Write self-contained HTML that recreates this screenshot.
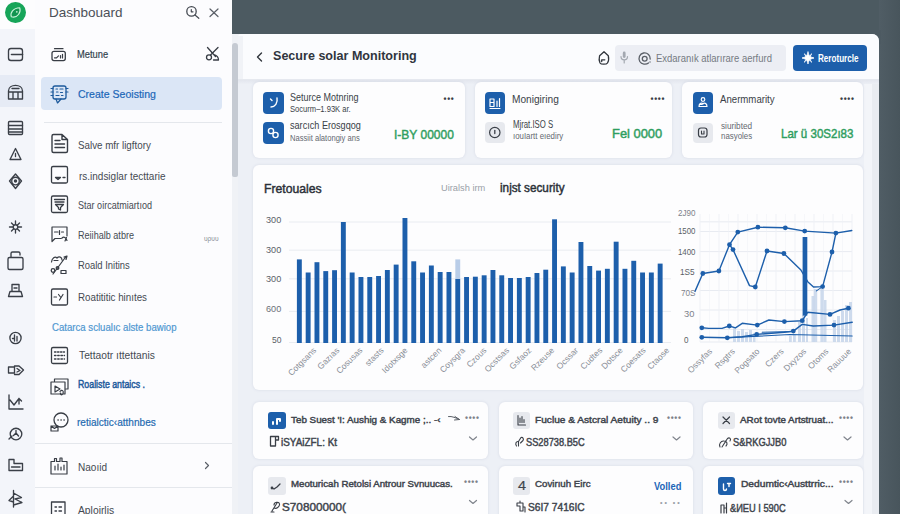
<!DOCTYPE html>
<html>
<head>
<meta charset="utf-8">
<style>
*{box-sizing:border-box;margin:0;padding:0}
html,body{width:900px;height:514px;overflow:hidden}
body{font-family:"Liberation Sans",sans-serif;background:#edf0f6;position:relative;color:#2b3038}
.abs{position:absolute}
.t{position:absolute;white-space:nowrap;line-height:1;transform-origin:left center;transform:translateY(-50%)}
#topbar{left:232px;top:0;width:668px;height:34px;background:#4c5a61}
#rightbar{left:879px;top:0;width:21px;height:514px;background:linear-gradient(to right,#505d65,#48555c)}
#panel{left:238px;top:34px;width:641px;height:480px;background:#edf0f6;border-top-right-radius:7px;border-top-left-radius:3px;overflow:hidden}
#phead{left:0;top:0;width:641px;height:46px;background:#fbfcfe;border-bottom:1px solid #e6e9ef}
#rail{left:0;top:0;width:35px;height:514px;background:#f3f5fa}
#railtop{left:0;top:0;width:35px;height:29px;background:#fdfdfe}
#side{left:35px;top:0;width:197px;height:514px;background:#fcfcfe}
#sbar{left:232px;top:34px;width:6px;height:480px;background:#f0f2f6}
#sthumb{left:232px;top:42.500px;width:6px;height:134px;background:#c5cad2;border-radius:3px 3px 2px 2px}
.card{position:absolute;background:#fdfdfe;border-radius:6px;box-shadow:0 0 3px rgba(120,130,160,.18)}
.ico{position:absolute;border-radius:4px}
.blue{background:#1d5fab}
.grey{background:#e7e9ee}
.mi{font-size:11px;color:#3a3f47}
.dots{position:absolute;font-size:8.5px;letter-spacing:.7px;color:#3a3f47;line-height:1;transform:translateY(-50%);font-weight:bold}
.green{color:#2c9c5c}
.hr{position:absolute;height:1px;background:#e4e7ec}
.xl{position:absolute;font-size:8.5px;color:#8a8f98;white-space:nowrap;line-height:1;transform-origin:right top;transform:rotate(-45deg)}
</style>
</head>
<body>
<div id="topbar" class="abs"></div>
<div id="rightbar" class="abs"></div>
<div class="abs" style="left:869px;top:30px;width:12px;height:14px;background:#4d5a62"></div>
<div id="sbar" class="abs"></div>
<div id="sthumb" class="abs"></div>

<!-- RAIL -->
<div id="rail" class="abs"></div>
<div id="railtop" class="abs"></div>
<div class="abs" style="left:0;top:75px;width:35px;height:32px;background:#e6ebf5"></div>
<div id="side" class="abs"></div>
<!-- logo -->
<div class="abs" style="left:5.100px;top:2.300px;width:20.800px;height:20.800px;border-radius:50%;background:#17a559"></div>
<svg class="abs" style="left:5px;top:2px" width="21" height="21" viewBox="0 0 21 21"><path d="M6.300 14.800 C5 11 8 6 14.800 5.800 C16 10 13 16.500 6.300 14.800 Z" fill="#129450" stroke="#cdf3dc" stroke-width="1.100" stroke-linejoin="round"/><circle cx="11.800" cy="9.800" r="0.900" fill="#bfeccf"/></svg>
<svg class="abs" style="left:0;top:28px" width="35" height="486" viewBox="0 28 35 486" fill="none" stroke="#3a3f47" stroke-width="1.35" stroke-linecap="round" stroke-linejoin="round">
<!-- card 54 -->
<rect x="8.5" y="48.5" width="14" height="12" rx="2.5"/><path d="M11.5 54.5 H22.5" stroke-width="1.6"/>
<!-- building 92 -->
<path d="M8.5 99 V91 C8.5 83.5 22.5 83.5 22.5 91 V99 Z M8.5 92 H22.5 M13 92 V99 M18 92 V99 M12 88.5 H19"/>
<!-- list 128 -->
<rect x="8.5" y="121.500" width="14" height="13" rx="1"/><path d="M8.5 125.500 H22.5 M8.5 129 H22.5 M8.5 132 H22.500"/>
<!-- triangle 154 -->
<path d="M15.5 148.500 L21 159.500 H10 Z M15.5 153.500 V156.500"/>
<!-- target 181 -->
<path d="M15.5 174 L21.5 181 L15.5 188.500 L9.5 181 Z"/><circle cx="15.5" cy="181" r="3.8"/><circle cx="15.500" cy="181" r="1" fill="#3a3f47"/>
<!-- sparkle 227 -->
<path d="M15.5 221 V233 M9.5 227 H21.5 M11.500 223 L19.500 231 M19.500 223 L11.500 231"/><circle cx="15.5" cy="227" r="2.300" fill="#f3f5fa"/>
<!-- lock 260 -->
<path d="M9.500 257.500 H21.500 C22.500 257.500 23 258 23 259 V268 C23 269 22.500 269.500 21.500 269.500 H9.500 C8.500 269.500 8 269 8 268 V259 C8 258 8.500 257.500 9.500 257.500 Z M11 257.500 V253.500 C11 252.500 11.500 252 12.500 252 H18.500 C19.500 252 20 252.500 20 253.500 V255"/>
<!-- stamp 290 -->
<path d="M12 284.500 H19 V291.500 H12 Z M10 291.500 H21 L22.500 296.500 H8.5 Z M14 288 H17"/>
<!-- clock 338 -->
<circle cx="15.500" cy="338" r="5.600"/><path d="M14.500 335 V341 M17 336.500 V341 M12.500 338.500 H14.500"/>
<!-- arrow 370 -->
<path d="M8.5 367 H14.500 V373 H8.5 Z M14.500 366 H19 L23.500 370 L19 374.500 H14.500 M17 368.500 L20 370.500 L17 372"/>
<!-- chart 402 -->
<path d="M9 395 V409 H23 M10 400 L14 405 L19 398.500 L21.500 401 M19 398.500 V404"/>
<!-- circle 434 -->
<circle cx="16" cy="434" r="5.800"/><path d="M9 439 L12 436 M13.500 435.500 L16 433 L18.500 436 M16 430.500 V433"/>
<!-- folder 465 -->
<path d="M9 459.500 H14 V463.500 H22.500 V470.500 H9 Z M11.500 467 H20"/>
<!-- fan 499 -->
<path d="M13.500 490.500 V507 M13.500 493 L21.500 497.500 L15 499 L22 502.500 L13.500 505 M13.500 496 L9 500.500 L13.500 502"/>
</svg>

<div class="abs" style="left:41.300px;top:76.600px;width:180.500px;height:33px;border-radius:4px;background:#dbe6f6"></div>
<div class="hr" style="left:44px;top:122px;width:178px"></div>
<div class="hr" style="left:35px;top:443px;width:197px"></div>
<div class="hr" style="left:35px;top:487px;width:197px"></div>
<svg class="abs" style="left:35px;top:0" width="197" height="514" viewBox="35 0 197 514" fill="none" stroke="#383d45" stroke-width="1.3" stroke-linecap="round" stroke-linejoin="round">
<!-- search + close -->
<circle cx="191.500" cy="11.400" r="4.700" stroke="#454a52"/><path d="M195 15 L198.800 18.300 M191.300 9.500 V11.800 H193" stroke="#454a52" stroke-width="1.200"/>
<path d="M210 9 L218 16.500 M218 9 L210 16.500" stroke="#5a5f67" stroke-width="1.2"/>
<!-- scissors -->
<path d="M207.500 47.500 L215.500 56.500 M218 47.500 L210.500 55 M214 54.500 C217 55.500 218.500 58 218.500 60 H213.500"/><circle cx="209" cy="57.300" r="2.500"/>
<!-- Metune icon -->
<rect x="52" y="51.300" width="13.300" height="9.300" rx="2"/><path d="M54.500 48.700 H63 M54.500 57.800 L56.500 57.800 L58.500 55.800 M60.500 55.500 V58 M62.500 54.300 V58" stroke-width="1.200"/>
<!-- Create icon -->
<g stroke="#1d5a9c"><rect x="53" y="86" width="13" height="13" rx="2"/><path d="M51 88.500 H53 M51 92 H53 M51 95.500 H53 M66 88.500 H68 M66 92 H68 M56 99 L57.500 103 L61 99 M56 89 H57.500 M60 89 H63 M56.500 92 H58 M60.500 92.500 H62.500 M56 95.500 H59 M61.500 95.500 H63" stroke-width="1.200"/></g>
<!-- doc 145 -->
<path d="M53.500 134.500 H62 L67.500 139.500 V151 C67.500 152 67 152.500 66 152.500 H53.500 C52.500 152.500 52 152 52 151 V136 C52 135 52.500 134.500 53.500 134.500 Z M55 140.500 H60 M55 144 H64.500 M55 147.500 H64.500 M62 134.500 V139.500 H67.500" stroke-width="1.400"/>
<!-- box 175 -->
<rect x="51.500" y="166.500" width="16" height="16.500" rx="1.500"/><path d="M55.500 177.500 H60.500 L58 179.500 Z M63 177.500 H65" />
<!-- filter 205 -->
<rect x="51.500" y="196" width="16" height="16.500" rx="1.500"/><path d="M54.500 199.500 H64.500 M55 202 H64 M55.500 204.500 H63.500 L60.500 207.500 V210 L58.500 209 V207.500 Z"/>
<!-- img 235 -->
<path d="M52 241.500 V227 H67 V236 M52 241.500 L55 238.500 H61 M54.500 232 H58 M59.500 230.500 V234.500 M61.500 232 H63.500 M62 238 C64 236 66 238 67 240.500 M65 241 L66.500 237.500" stroke-width="1.200"/>
<!-- tools 265 -->
<path d="M53 274 L66 256.500 M51.500 262 C52 258 55 256 57 258 C59 256 62 257 62 260 M54 260.500 H58 M64 257 L67 256 L66 259.500 M61 273.500 V270.500 H66 V273.500 Z" stroke-width="1.200"/><circle cx="53" cy="270.500" r="1.800"/><circle cx="57.500" cy="268" r="1.300"/>
<!-- xy 297 -->
<rect x="51.500" y="289" width="16" height="16" rx="1.500"/><path d="M54 297 H56.500 M58.500 294.500 L60.500 297 M63 294.500 L59.500 300" stroke-width="1.200"/>
<!-- calendar 356 -->
<rect x="51.500" y="347.500" width="16" height="16" rx="1.500"/><path d="M54.500 352 H64.500" stroke-dasharray="1.500 1.500"/><path d="M54.500 355.500 H64.500 M54.500 359 H64.500" stroke-dasharray="1.500 1.700"/>
<!-- imgs 387 -->
<path d="M54.500 381 V379 H68 V389 H66 M51 382 H65 V394 H51 Z M55 386 L60 389 L55 392 Z M60 391.500 C62 389 64 391 63 393.500 C62 395.500 60 395 60.500 393" stroke-width="1.200"/>
<!-- chat 422 -->
<circle cx="61" cy="420" r="7"/><path d="M58 420 H58.200 M61 420 H61.200 M64 420 H64.200" stroke-width="1.500"/><path d="M51 426 H58 V431 H51 Z M51 426 L54.500 428.500 L58 426" fill="#fcfcfe" stroke-width="1.200"/>
<!-- Naoid 466 -->
<path d="M51 461.500 H54.500 V458.500 H56.500 V461.500 H60 V458 H62 V461.500 H67 V474 H51 Z M55 470 V466 M58 470 V464 M61 470 V467 M64 470 V465" stroke-width="1.200"/>
<path d="M205.500 462.500 L208.500 465.500 L205.500 468.500" stroke="#5a5f67" stroke-width="1.200"/>
<!-- Aploirlis 509 -->
<path d="M51.500 514 V502 H65 V514 M55 507 H56.500 M59 507 H61.500 M55 511 H56.500 M59 511 H61.500"/>
</svg>


<!-- MAIN PANEL -->
<div id="panel" class="abs">
<div id="phead" class="abs"></div>
</div>
<div class="abs" style="left:238px;top:36px;width:5px;height:43px;background:#f1f3f7"></div>
<div class="abs" style="left:864px;top:80px;width:8px;height:434px;background:#f3f5f9"></div>
<div class="abs" style="left:872px;top:80px;width:7px;height:434px;background:#e9ecf1"></div>
<div class="abs" style="left:238px;top:80px;width:641px;height:4px;background:linear-gradient(#e3e6ee,#eceff5)"></div>
<svg class="abs" style="left:238px;top:35px" width="641" height="45" viewBox="238 35 641 45" fill="none" stroke="#30353c" stroke-width="1.4" stroke-linecap="round" stroke-linejoin="round">
<path d="M261.500 53 L257.500 57 L261.500 61"/>
<!-- home -->
<path d="M604 51.700 L599.600 55.700 C599 58 599 61 600 63 C601 64.600 606.500 64.600 607.500 63 C608.800 61 608.800 58 608.300 55.700 Z M601.700 61.500 V59.800 H604.800" stroke-width="1.300"/>
</svg>
<div class="abs" style="left:615.300px;top:45px;width:170.500px;height:26px;border-radius:4px;background:#eceef4"></div>
<svg class="abs" style="left:616px;top:45px" width="170" height="26" viewBox="616 45 170 26" fill="none" stroke="#a3a8b0" stroke-width="1.2" stroke-linecap="round" stroke-linejoin="round">
<rect x="622.800" y="51.500" width="2.800" height="6.500" rx="1.400" fill="#a3a8b0" stroke="none"/><path d="M621 56.500 C621 61 627.500 61 627.500 56.500 M624.200 60 V63"/>
<path d="M648.500 63 C646 65 641.500 64.500 639.800 61.500 C638 58 639.500 53.800 643.500 53 C647.500 52.300 650.500 55.500 650.200 59" stroke="#5a5f67" stroke-width="1.300"/><circle cx="644.700" cy="58.700" r="2.400" stroke="#5a5f67" stroke-width="1.300"/><circle cx="650" cy="62" r="0.700" fill="#5a5f67" stroke="none"/>
</svg>
<div class="abs" style="left:793px;top:45px;width:74px;height:26px;border-radius:4px;background:#1d5fab"></div>
<svg class="abs" style="left:800px;top:50px" width="16" height="16" viewBox="0 0 16 16" fill="none" stroke="#fff" stroke-width="1.3" stroke-linecap="round" stroke-linejoin="round">
<path d="M8 2 C8.500 5.500 10 7 14 8 C10 9 8.500 10.500 8 14 C7.500 10.500 6 9 2 8 C6 7 7.500 5.500 8 2 Z" fill="#fff" stroke-width="0.800"/><path d="M4.500 4 L6 6 M11.500 12 L10 10 M11.500 4 L10.500 5.500 M4.500 12 L5.500 10.500" stroke-width="1.100"/>
</svg>

<div class="card" style="left:253px;top:82px;width:212px;height:76px"></div>
<div class="card" style="left:475px;top:82px;width:197px;height:76px"></div>
<div class="card" style="left:682px;top:82px;width:181px;height:76px"></div>
<div class="ico blue" style="left:263px;top:92px;width:20.500px;height:21.500px"></div>
<div class="ico blue" style="left:263px;top:122px;width:20.500px;height:21.500px"></div>
<div class="ico blue" style="left:484.500px;top:92px;width:20.500px;height:21.500px"></div>
<div class="ico grey" style="left:485px;top:122px;width:19.500px;height:21px"></div>
<div class="ico blue" style="left:692.500px;top:92px;width:20.500px;height:21.500px"></div>
<div class="ico grey" style="left:693px;top:122.500px;width:19.500px;height:20.500px"></div>
<svg class="abs" style="left:253px;top:82px" width="610" height="76" viewBox="253 82 610 76" fill="none" stroke="#fff" stroke-width="1.4" stroke-linecap="round" stroke-linejoin="round">
<!-- c1 i1 -->
<path d="M270.500 99 L272 100.500 M277 98 C278 103 275 107 271 107"/>
<!-- c1 i2 -->
<circle cx="271" cy="131" r="2.600"/><circle cx="275.500" cy="135" r="2.600"/>
<!-- c2 i1 -->
<path d="M490 99 H494 V106.500 H490 Z M490 102.500 H494 M497 101 V106.500 M499.500 98.500 V106.500 M490 108.500 H500" stroke-width="1.200"/>
<!-- c2 i2 -->
<circle cx="494.800" cy="132.500" r="5.200" stroke="#3a3f47" stroke-width="1.200"/><path d="M494.800 130.500 V133.500" stroke="#3a3f47" stroke-width="1.300"/>
<!-- c3 i1 -->
<circle cx="703" cy="99.500" r="1.800" stroke-width="1.200"/><path d="M699 106.500 C699 103 702 102.500 703 104 C704 102.500 707 103 707 106.500 Z M699.500 104.500 H702" stroke-width="1.200"/>
<!-- c3 i2 -->
<rect x="698.500" y="128" width="8.500" height="9" rx="2.500" stroke="#3a3f47" stroke-width="1.200"/><path d="M701.500 131 V134 H704 V131" stroke="#3a3f47" stroke-width="1.100"/>
</svg>
<div class="dots" style="left:443.500px;top:99px">•••</div>
<div class="dots" style="left:650.500px;top:99px">••••</div>
<div class="dots" style="left:840px;top:99px">••••</div>

<div class="card" style="left:253px;top:165px;width:610px;height:225px"></div>
<svg class="abs" style="left:253px;top:165px" width="610" height="225" viewBox="253 165 610 225" fill="none">
<path d="M289 222 H671" stroke="#e9ecf1" stroke-width="1"/>
<path d="M289 250.2 H671" stroke="#e9ecf1" stroke-width="1"/>
<path d="M289 278.8 H671" stroke="#e9ecf1" stroke-width="1"/>
<path d="M289 311.4 H671" stroke="#e9ecf1" stroke-width="1"/>
<path d="M289 342.5 H671" stroke="#e9ecf1" stroke-width="1"/>
<rect x="296.9" y="259.4" width="4.9" height="83.6" fill="#1d5fab"/>
<rect x="305.7" y="272.5" width="4.9" height="70.5" fill="#1d5fab"/>
<rect x="314.5" y="262.2" width="4.9" height="80.8" fill="#1d5fab"/>
<rect x="323.3" y="271.1" width="4.9" height="71.9" fill="#1d5fab"/>
<rect x="332.1" y="270.2" width="4.9" height="72.8" fill="#1d5fab"/>
<rect x="340.9" y="222" width="4.9" height="121.0" fill="#1d5fab"/>
<rect x="349.7" y="272.5" width="4.9" height="70.5" fill="#1d5fab"/>
<rect x="358.5" y="277" width="4.9" height="66.0" fill="#1d5fab"/>
<rect x="367.3" y="277" width="4.9" height="66.0" fill="#1d5fab"/>
<rect x="376.1" y="276" width="4.9" height="67.0" fill="#1d5fab"/>
<rect x="384.9" y="270" width="4.9" height="73.0" fill="#1d5fab"/>
<rect x="393.7" y="264.6" width="4.9" height="78.4" fill="#1d5fab"/>
<rect x="402.5" y="218" width="4.9" height="125.0" fill="#1d5fab"/>
<rect x="411.3" y="261.3" width="4.9" height="81.7" fill="#1d5fab"/>
<rect x="420.1" y="272.5" width="4.9" height="70.5" fill="#1d5fab"/>
<rect x="428.9" y="265.5" width="4.9" height="77.5" fill="#1d5fab"/>
<rect x="437.7" y="272" width="4.9" height="71.0" fill="#1d5fab"/>
<rect x="446.5" y="272" width="4.9" height="71.0" fill="#1d5fab"/>
<rect x="455.3" y="259.4" width="4.9" height="19.6" fill="#b9cde8"/>
<rect x="455.3" y="279" width="4.9" height="64.0" fill="#1d5fab"/>
<rect x="464.1" y="277" width="4.9" height="66.0" fill="#1d5fab"/>
<rect x="472.9" y="276.7" width="4.9" height="66.3" fill="#1d5fab"/>
<rect x="481.7" y="275.3" width="4.9" height="67.7" fill="#1d5fab"/>
<rect x="490.5" y="270" width="4.9" height="73.0" fill="#1d5fab"/>
<rect x="499.3" y="275.3" width="4.9" height="67.7" fill="#1d5fab"/>
<rect x="508.1" y="278" width="4.9" height="65.0" fill="#1d5fab"/>
<rect x="516.9" y="278" width="4.9" height="65.0" fill="#1d5fab"/>
<rect x="525.7" y="277" width="4.9" height="66.0" fill="#1d5fab"/>
<rect x="534.5" y="273" width="4.9" height="70.0" fill="#1d5fab"/>
<rect x="543.3" y="269.7" width="4.9" height="73.3" fill="#1d5fab"/>
<rect x="552.1" y="219.3" width="4.9" height="123.7" fill="#1d5fab"/>
<rect x="560.9" y="266.4" width="4.9" height="76.6" fill="#1d5fab"/>
<rect x="569.7" y="272.5" width="4.9" height="70.5" fill="#1d5fab"/>
<rect x="578.5" y="242" width="4.9" height="101.0" fill="#1d5fab"/>
<rect x="587.3" y="266" width="4.9" height="77.0" fill="#1d5fab"/>
<rect x="596.1" y="270.6" width="4.9" height="72.4" fill="#1d5fab"/>
<rect x="604.9" y="268.8" width="4.9" height="74.2" fill="#1d5fab"/>
<rect x="613.7" y="241.7" width="4.9" height="101.3" fill="#1d5fab"/>
<rect x="622.5" y="268.8" width="4.9" height="74.2" fill="#1d5fab"/>
<rect x="631.3" y="260.8" width="4.9" height="82.2" fill="#1d5fab"/>
<rect x="640.1" y="272.5" width="4.9" height="70.5" fill="#1d5fab"/>
<rect x="648.9" y="272.5" width="4.9" height="70.5" fill="#1d5fab"/>
<rect x="657.7" y="263.6" width="4.9" height="79.4" fill="#1d5fab"/>
<path d="M700 221.8 H852" stroke="#e8ebf1" stroke-width="1"/>
<path d="M700 231.5 H852" stroke="#e8ebf1" stroke-width="1"/>
<path d="M700 251.6 H852" stroke="#e8ebf1" stroke-width="1"/>
<path d="M700 271 H852" stroke="#e8ebf1" stroke-width="1"/>
<path d="M700 290.5 H852" stroke="#e8ebf1" stroke-width="1"/>
<path d="M700 310 H852" stroke="#e8ebf1" stroke-width="1"/>
<path d="M700 329.5 H852" stroke="#e8ebf1" stroke-width="1"/>
<path d="M700 342 H852" stroke="#e8ebf1" stroke-width="1"/>
<path d="M700.0 214 V342" stroke="#eff1f6" stroke-width="1"/>
<path d="M709.5 214 V342" stroke="#eff1f6" stroke-width="0.5"/>
<path d="M719.0 214 V342" stroke="#eff1f6" stroke-width="1"/>
<path d="M728.5 214 V342" stroke="#eff1f6" stroke-width="0.5"/>
<path d="M738.0 214 V342" stroke="#eff1f6" stroke-width="1"/>
<path d="M747.5 214 V342" stroke="#eff1f6" stroke-width="0.5"/>
<path d="M757.0 214 V342" stroke="#eff1f6" stroke-width="1"/>
<path d="M766.5 214 V342" stroke="#eff1f6" stroke-width="0.5"/>
<path d="M776.0 214 V342" stroke="#eff1f6" stroke-width="1"/>
<path d="M785.5 214 V342" stroke="#eff1f6" stroke-width="0.5"/>
<path d="M795.0 214 V342" stroke="#eff1f6" stroke-width="1"/>
<path d="M804.5 214 V342" stroke="#eff1f6" stroke-width="0.5"/>
<path d="M814.0 214 V342" stroke="#eff1f6" stroke-width="1"/>
<path d="M823.5 214 V342" stroke="#eff1f6" stroke-width="0.5"/>
<path d="M833.0 214 V342" stroke="#eff1f6" stroke-width="1"/>
<path d="M842.5 214 V342" stroke="#eff1f6" stroke-width="0.5"/>
<path d="M852.0 214 V342" stroke="#eff1f6" stroke-width="1"/>
<rect x="733" y="328" width="3" height="14" fill="#c6d5ea" opacity="0.85"/>
<rect x="737" y="331" width="3" height="11" fill="#c6d5ea" opacity="0.85"/>
<rect x="741" y="329" width="3" height="13" fill="#c6d5ea" opacity="0.85"/>
<rect x="745" y="332" width="3" height="10" fill="#c6d5ea" opacity="0.85"/>
<rect x="749" y="330" width="3" height="12" fill="#c6d5ea" opacity="0.85"/>
<rect x="753" y="333" width="2.5" height="9" fill="#c6d5ea" opacity="0.85"/>
<rect x="789" y="336" width="2.8" height="6" fill="#c6d5ea" opacity="0.85"/>
<rect x="793" y="335" width="2.8" height="7" fill="#c6d5ea" opacity="0.85"/>
<rect x="798" y="322" width="3" height="20" fill="#c6d5ea" opacity="0.85"/>
<rect x="802" y="315" width="3" height="27" fill="#c6d5ea" opacity="0.85"/>
<rect x="806" y="318" width="2" height="24" fill="#c6d5ea" opacity="0.85"/>
<rect x="811.5" y="296" width="3" height="46" fill="#c6d5ea" opacity="0.85"/>
<rect x="813.8" y="289" width="3.4" height="53" fill="#c6d5ea" opacity="0.85"/>
<rect x="820.4" y="289" width="3.4" height="53" fill="#c6d5ea" opacity="0.85"/>
<rect x="824" y="300" width="2.5" height="42" fill="#c6d5ea" opacity="0.85"/>
<rect x="833" y="320" width="3" height="22" fill="#c6d5ea" opacity="0.85"/>
<rect x="837" y="316" width="3" height="26" fill="#c6d5ea" opacity="0.85"/>
<rect x="841" y="311" width="3" height="31" fill="#c6d5ea" opacity="0.85"/>
<rect x="845" y="305" width="3" height="37" fill="#c6d5ea" opacity="0.85"/>
<rect x="849" y="302" width="3" height="40" fill="#c6d5ea" opacity="0.85"/>
<rect x="802.6" y="237" width="4.7" height="78.6" fill="#1d5fab"/>
<path d="M695 291.4 L702.8 273.5 L718.9 271 L729.5 244.7 L737.8 232.1 L757.9 227.2 L785.3 227.8 L804.7 231.1 L835.9 233.1 L851.8 230.5" stroke="#1d5fab" stroke-width="1.4" stroke-linejoin="round" stroke-linecap="round"/>
<circle cx="702.8" cy="273.5" r="2.4" fill="#1d5fab"/>
<circle cx="718.9" cy="271" r="2.4" fill="#1d5fab"/>
<circle cx="729.5" cy="244.7" r="2.4" fill="#1d5fab"/>
<circle cx="737.8" cy="232.1" r="2.4" fill="#1d5fab"/>
<circle cx="757.9" cy="227.2" r="2.4" fill="#1d5fab"/>
<circle cx="785.3" cy="227.8" r="2.4" fill="#1d5fab"/>
<circle cx="804.7" cy="231.1" r="2.4" fill="#1d5fab"/>
<circle cx="835.9" cy="233.1" r="2.4" fill="#1d5fab"/>
<path d="M733 249.6 L749.5 285.6 L755.3 287 L767 251 L783.9 253.5 L800.9 270 L807.7 281.7 L813.5 287 L822.6 286.6 L832 252 L835.9 233.1" stroke="#1d5fab" stroke-width="1.4" stroke-linejoin="round" stroke-linecap="round"/>
<circle cx="733" cy="249.6" r="2.4" fill="#1d5fab"/>
<circle cx="755.3" cy="287" r="2.4" fill="#1d5fab"/>
<circle cx="767" cy="251" r="2.4" fill="#1d5fab"/>
<circle cx="783.9" cy="253.5" r="2.4" fill="#1d5fab"/>
<circle cx="822.6" cy="286.6" r="2.4" fill="#1d5fab"/>
<circle cx="832" cy="252" r="2.4" fill="#1d5fab"/>
<path d="M729.5 244.7 L733 249.6" stroke="#1d5fab" stroke-width="1.4" stroke-linejoin="round" stroke-linecap="round"/>
<path d="M816.4 290.9 L822.6 286.6" stroke="#1d5fab" stroke-width="1.1" stroke-linejoin="round" stroke-linecap="round"/>
<path d="M701.8 327.8 L708.9 328.4 L722 328.4 L729.3 326 L735.5 327.8 L742.2 323.3 L757.3 325.1 L768.9 320 L784.4 321.6 L802.2 320.7 L807.8 312.2 L830 314.4 L840 310 L848.4 308.2" stroke="#1d5fab" stroke-width="1.4" stroke-linejoin="round" stroke-linecap="round"/>
<circle cx="701.8" cy="327.8" r="2.4" fill="#1d5fab"/>
<circle cx="729.3" cy="326" r="2.4" fill="#1d5fab"/>
<circle cx="757.3" cy="325.1" r="2.4" fill="#1d5fab"/>
<circle cx="784.4" cy="321.6" r="2.4" fill="#1d5fab"/>
<circle cx="802.2" cy="320.7" r="2.4" fill="#1d5fab"/>
<circle cx="830" cy="314.4" r="2.4" fill="#1d5fab"/>
<circle cx="848.4" cy="308.2" r="2.4" fill="#1d5fab"/>
<path d="M701.8 337.3 L727.3 337.8 L742.2 336.7 L756.7 334.4 L784.4 332.2 L793.3 331.1 L802.2 324.4 L813.3 326 L834 325.1 L852.2 322.2" stroke="#1d5fab" stroke-width="1.4" stroke-linejoin="round" stroke-linecap="round"/>
<circle cx="701.8" cy="337.3" r="2.4" fill="#1d5fab"/>
<circle cx="727.3" cy="337.8" r="2.4" fill="#1d5fab"/>
<circle cx="756.7" cy="334.4" r="2.4" fill="#1d5fab"/>
<circle cx="793.3" cy="331.1" r="2.4" fill="#1d5fab"/>
<circle cx="834" cy="325.1" r="2.4" fill="#1d5fab"/>
<path d="M762.2 332.2 L791.1 331.6" stroke="#1d5fab" stroke-width="1.1" stroke-linejoin="round" stroke-linecap="round"/>
<path d="M727.3 337.8 L790 334.5 L852.2 336" stroke="#1d5fab" stroke-width="1.1" stroke-linejoin="round" stroke-linecap="round"/>
</svg>
<div class="xl" style="right:588.5px;top:345.5px">Cotgsans</div>
<div class="xl" style="right:565.5px;top:345.5px">Gazıas</div>
<div class="xl" style="right:541.5px;top:345.5px">Cosusas</div>
<div class="xl" style="right:520.5px;top:345.5px">stasts</div>
<div class="xl" style="right:496.5px;top:345.5px">Idotxsge</div>
<div class="xl" style="right:462.5px;top:345.5px">astcen</div>
<div class="xl" style="right:439.5px;top:345.5px">Coysgra</div>
<div class="xl" style="right:417.5px;top:345.5px">Czous</div>
<div class="xl" style="right:395.5px;top:345.5px">Ocstsas</div>
<div class="xl" style="right:373.5px;top:345.5px">Gsfaoz</div>
<div class="xl" style="right:350.5px;top:345.5px">Rzeuse</div>
<div class="xl" style="right:326.5px;top:345.5px">Ocssar</div>
<div class="xl" style="right:302.5px;top:345.5px">Cudtes</div>
<div class="xl" style="right:281.5px;top:345.5px">Dotsce</div>
<div class="xl" style="right:258.5px;top:345.5px">Coesats</div>
<div class="xl" style="right:235.5px;top:345.5px">Ctaose</div>
<div class="xl" style="right:192.5px;top:346.5px">Ossyfas</div>
<div class="xl" style="right:169.1px;top:346.5px">Rsgtrs</div>
<div class="xl" style="right:144.6px;top:346.5px">Pogsato</div>
<div class="xl" style="right:121.3px;top:346.5px">Czers</div>
<div class="xl" style="right:97.9px;top:346.5px">Dxyzos</div>
<div class="xl" style="right:75.7px;top:346.5px">Otoms</div>
<div class="xl" style="right:52.8px;top:346.5px">Rauuue</div>
<div class="card" style="left:253px;top:402px;width:235px;height:57px"></div>
<div class="card" style="left:498.500px;top:402px;width:194.500px;height:57px"></div>
<div class="card" style="left:703px;top:402px;width:160px;height:57px"></div>
<div class="card" style="left:253px;top:465.500px;width:235px;height:60px"></div>
<div class="card" style="left:498.500px;top:465.500px;width:194.500px;height:60px"></div>
<div class="card" style="left:703px;top:465.500px;width:160px;height:60px"></div>
<div class="ico blue" style="left:267.500px;top:411.500px;width:18px;height:17.500px;border-radius:3px"></div>
<div class="ico grey" style="left:268px;top:477px;width:17.500px;height:17.500px;border-radius:3px"></div>
<div class="ico grey" style="left:513px;top:411.500px;width:17px;height:17.500px;border-radius:3px"></div>
<div class="ico grey" style="left:513px;top:477px;width:17px;height:17.500px;border-radius:3px"></div>
<div class="ico grey" style="left:717.500px;top:411.500px;width:17px;height:17.500px;border-radius:3px"></div>
<div class="ico blue" style="left:717.500px;top:477px;width:17.500px;height:17.500px;border-radius:3px"></div>
<svg class="abs" style="left:253px;top:402px" width="610" height="112" viewBox="253 402 610 112" fill="none" stroke="#3a3f47" stroke-width="1.2" stroke-linecap="round" stroke-linejoin="round">
<!-- r1c1 icon -->
<path d="M273 422 V424 M277 419 V424 M277 419 H280 V421" stroke="#fff" stroke-width="2"/>
<!-- r2c1 icon -->
<path d="M272 488 L274 489 L277 487 L280 484" stroke-width="1.300"/><circle cx="272" cy="488" r="0.800" fill="#3a3f47"/>
<!-- r1c2 icon -->
<path d="M518 415.500 V425 H525.500 M520 422.500 V418 M522 422.500 V416.500 M524 422.500 V419.500" stroke-width="1.100"/>
<!-- r1c3 icon X -->
<path d="M723 417 L729.500 423.500 M729.500 417 L723 423.500" stroke-width="1.200"/>
<!-- r2c3 icon -->
<path d="M723.500 484 V489 C723.500 491 726.500 491 726.500 489 M729 483.500 V486.500 M727.500 483.500 H730.500" stroke="#fff" stroke-width="1.400"/>
<!-- arrows r1c1 -->
<path d="M448.500 416.500 C452 416 456 418 459.500 419.500 M455 416.500 L459.500 419.500 L454.500 420" stroke="#5a5f67" stroke-width="1"/>
<!-- chevrons -->
<g stroke="#80858d" stroke-width="1.200">
<path d="M469.500 437 L473 440 L476.500 437"/>
<path d="M469.500 500.500 L473 503.500 L476.500 500.500"/>
<path d="M673 437 L676.500 440 L680 437"/>
<path d="M844 437 L847.500 440 L851 437"/>
<path d="M845 500.500 L848.500 503.500 L852 500.500"/>
</g>
<!-- line-2 leading glyph icons -->
<path d="M270.500 436.500 H275.500 V446 H270.500 Z M275.500 436.500 H278.500 V440 H275.500" stroke-width="1.300"/>
<path d="M272 511 L277 503 M274 505 C274 502 279 501 279.500 504 C280 507 276 509 274.500 508 M271 512 H274" stroke-width="1.100"/>
<path d="M516.500 446 C515 444 516 441 518.500 441.500 V446 M518.500 441.500 L521 437.500 C523 437 524 439 523 440.500 L520.500 443" stroke-width="1.100"/>
<path d="M517 503 H523 V511 H520 V506 H517 Z M520 503 V501 M523 507 H525 V512" stroke-width="1.100"/>
<path d="M720 447 C718.500 444 721 440.500 724 441 C727 441 728 444 726 446 M722 447 L727.500 438.500 C729.500 437 731.500 439 730 441" stroke-width="1.100"/>
<path d="M721 505 V513 M721 505 H724 V513 M726.500 503 V513 M724 508 H726.500" stroke-width="1.200"/>
</svg>
<div class="dots" style="left:465px;top:417.500px;color:#7d828a">••••</div>
<div class="dots" style="left:464px;top:481.500px;color:#7d828a">••••</div>
<div class="dots" style="left:667px;top:417.500px;color:#7d828a">••••</div>
<div class="dots" style="left:839px;top:417.500px;color:#7d828a">••••</div>
<div class="dots" style="left:839px;top:481.500px;color:#7d828a">••••</div>
<div class="dots" style="left:660px;top:501.500px;color:#9a9fa8;font-size:7px;letter-spacing:2px">•• ••</div>

<div class="t" style="left:49px;top:12.5px;font-size:13.5px;color:#4b5058;font-weight:400;transform:translateY(-50%) scaleX(0.999)">Dashbouard</div>
<div class="t" style="left:77.2px;top:55px;font-size:10.13px;color:#33444f;font-weight:400;-webkit-text-stroke:0.2px #33444f;transform:translateY(-50%) scaleX(0.921)">Metune</div>
<div class="t" style="left:78px;top:94px;font-size:11px;color:#1b66b8;font-weight:400;-webkit-text-stroke:0.2px #1b66b8;transform:translateY(-50%) scaleX(0.958)">Create Seoisting</div>
<div class="t" style="left:78px;top:145px;font-size:10.63px;color:#454a52;font-weight:400;transform:translateY(-50%) scaleX(0.920)">Salve mfr ligftory</div>
<div class="t" style="left:79.2px;top:175.7px;font-size:10.84px;color:#454a52;font-weight:400;transform:translateY(-50%) scaleX(0.921)">rs.indsiglar tecttarie</div>
<div class="t" style="left:78px;top:205.5px;font-size:10.23px;color:#454a52;font-weight:400;transform:translateY(-50%) scaleX(0.886)">Star oircatmiartıod</div>
<div class="t" style="left:78px;top:235.9px;font-size:10.23px;color:#454a52;font-weight:400;transform:translateY(-50%) scaleX(0.888)">Reiihalb atbre</div>
<div class="t" style="left:204.4px;top:237.7px;font-size:7px;color:#8a8f98;font-weight:400;transform:translateY(-50%) scaleX(0.944)">υρυυ</div>
<div class="t" style="left:78px;top:265.7px;font-size:10.23px;color:#454a52;font-weight:400;transform:translateY(-50%) scaleX(0.921)">Roald Initins</div>
<div class="t" style="left:78px;top:297.2px;font-size:10.62px;color:#454a52;font-weight:400;transform:translateY(-50%) scaleX(0.921)">Roatititic hinıtes</div>
<div class="t" style="left:52.1px;top:327.6px;font-size:10.45px;color:#4f97d1;font-weight:400;-webkit-text-stroke:0.2px #4f97d1;transform:translateY(-50%) scaleX(0.921)">Catarca sclualıc alste bawiop</div>
<div class="t" style="left:78.5px;top:355.4px;font-size:11px;color:#454a52;font-weight:400;transform:translateY(-50%) scaleX(0.932)">Tettaotr ıttettanis</div>
<div class="t" style="left:78px;top:385px;font-size:10.23px;color:#1d5a9c;font-weight:400;-webkit-text-stroke:0.45px #1d5a9c;transform:translateY(-50%) scaleX(0.861)">Roaliste antaics .</div>
<div class="t" style="left:77px;top:421.6px;font-size:10.93px;color:#1f6ab0;font-weight:400;-webkit-text-stroke:0.2px #1f6ab0;transform:translateY(-50%) scaleX(0.920)">retialctic‹atthnbes</div>
<div class="t" style="left:77.5px;top:466.8px;font-size:10.9px;color:#454a52;font-weight:400;transform:translateY(-50%) scaleX(0.921)">Naoıid</div>
<div class="t" style="left:77.5px;top:509.6px;font-size:11px;color:#454a52;font-weight:400;transform:translateY(-50%) scaleX(0.937)">Aploirlis</div>
<div class="t" style="left:273.3px;top:55.2px;font-size:13px;color:#30353d;font-weight:700;transform:translateY(-50%) scaleX(0.966)">Secure solar Monitoring</div>
<div class="t" style="left:656px;top:59.2px;font-size:10.31px;color:#757a82;font-weight:400;transform:translateY(-50%) scaleX(0.921)">Exdaranık atlarırare aerfurd</div>
<div class="t" style="left:817.5px;top:58.3px;font-size:10.5px;color:#ffffff;font-weight:700;transform:translateY(-50%) scaleX(0.771)">Reroturcle</div>
<div class="t" style="left:290.3px;top:98px;font-size:10.23px;color:#3a3f47;font-weight:400;transform:translateY(-50%) scaleX(0.880)">Seturce Motnring</div>
<div class="t" style="left:290.3px;top:109.5px;font-size:9.3px;color:#3a3f47;font-weight:400;transform:translateY(-50%) scaleX(0.816)">Socurm–1.93K ar.</div>
<div class="t" style="left:290.3px;top:125.7px;font-size:10.23px;color:#3a3f47;font-weight:400;transform:translateY(-50%) scaleX(0.891)">sarcıch Erosgqog</div>
<div class="t" style="left:290.3px;top:137.5px;font-size:8.84px;color:#646971;font-weight:400;transform:translateY(-50%) scaleX(0.861)">Nassiit alatongiy ans</div>
<div class="t" style="left:394.3px;top:134.3px;font-size:13px;color:#2f9e60;font-weight:400;-webkit-text-stroke:0.45px #2f9e60;transform:translateY(-50%) scaleX(0.924)">I-BY 00000</div>
<div class="t" style="left:512px;top:99.6px;font-size:11.16px;color:#3a3f47;font-weight:400;transform:translateY(-50%) scaleX(0.909)">Monigiring</div>
<div class="t" style="left:512.8px;top:125.2px;font-size:10.23px;color:#3a3f47;font-weight:400;transform:translateY(-50%) scaleX(0.761)">Mjrat.ISO S</div>
<div class="t" style="left:512.8px;top:137px;font-size:9.3px;color:#646971;font-weight:400;transform:translateY(-50%) scaleX(0.845)">ıouIartt eıediry</div>
<div class="t" style="left:611.8px;top:134.3px;font-size:13.5px;color:#2f9e60;font-weight:400;-webkit-text-stroke:0.45px #2f9e60;transform:translateY(-50%) scaleX(0.955)">Fel 0000</div>
<div class="t" style="left:720px;top:100px;font-size:11.16px;color:#3a3f47;font-weight:400;transform:translateY(-50%) scaleX(0.863)">Anermmarity</div>
<div class="t" style="left:720.9px;top:126px;font-size:9.77px;color:#646971;font-weight:400;transform:translateY(-50%) scaleX(0.842)">siuribted</div>
<div class="t" style="left:720.9px;top:136.7px;font-size:9.3px;color:#646971;font-weight:400;transform:translateY(-50%) scaleX(0.847)">nasyoles</div>
<div class="t" style="left:780.5px;top:134.3px;font-size:12.52px;color:#2f9e60;font-weight:400;-webkit-text-stroke:0.45px #2f9e60;transform:translateY(-50%) scaleX(0.921)">Lar ü 30S2ı83</div>
<div class="t" style="left:264.3px;top:188px;font-size:13px;color:#2b3038;font-weight:400;-webkit-text-stroke:0.45px #2b3038;transform:translateY(-50%) scaleX(0.939)">Fretouales</div>
<div class="t" style="left:440.7px;top:188px;font-size:9.5px;color:#9a9fa8;font-weight:400;transform:translateY(-50%) scaleX(0.976)">Uiralsh irm</div>
<div class="t" style="left:500px;top:188px;font-size:12.74px;color:#2b3038;font-weight:400;-webkit-text-stroke:0.45px #2b3038;transform:translateY(-50%) scaleX(0.921)">injst security</div>
<div class="t" style="left:265.7px;top:219.8px;font-size:8.5px;color:#5a5f67;font-weight:400;transform:translateY(-50%) scaleX(1.071)">300</div>
<div class="t" style="left:265.7px;top:249.5px;font-size:8.5px;color:#5a5f67;font-weight:400;transform:translateY(-50%) scaleX(1.071)">300</div>
<div class="t" style="left:265.7px;top:278.6px;font-size:8.5px;color:#5a5f67;font-weight:400;transform:translateY(-50%) scaleX(1.071)">300</div>
<div class="t" style="left:265.7px;top:309.3px;font-size:8.5px;color:#6b7078;font-weight:400;transform:translateY(-50%) scaleX(1.071)">600</div>
<div class="t" style="left:272px;top:340px;font-size:8.5px;color:#5a5f67;font-weight:400;transform:translateY(-50%) scaleX(1.003)">50</div>
<div class="t" style="left:677.5px;top:213px;font-size:8.5px;color:#7d828a;font-weight:400;transform:translateY(-50%) scaleX(0.949)">2J90</div>
<div class="t" style="left:677.5px;top:231.1px;font-size:8.5px;color:#5a5f67;font-weight:400;transform:translateY(-50%) scaleX(0.925)">1500</div>
<div class="t" style="left:677.5px;top:251.6px;font-size:8.5px;color:#5a5f67;font-weight:400;transform:translateY(-50%) scaleX(0.925)">1400</div>
<div class="t" style="left:680.4px;top:272.4px;font-size:8.5px;color:#5a5f67;font-weight:400;transform:translateY(-50%) scaleX(0.965)">1S5</div>
<div class="t" style="left:681.4px;top:293px;font-size:8.5px;color:#7d828a;font-weight:400;transform:translateY(-50%) scaleX(0.965)">70S</div>
<div class="t" style="left:684px;top:314px;font-size:8.5px;color:#7d828a;font-weight:400;transform:translateY(-50%) scaleX(1.098)">30</div>
<div class="t" style="left:684.4px;top:340px;font-size:8.5px;color:#5a5f67;font-weight:400;transform:translateY(-50%) scaleX(0.950)">0</div>
<div class="t" style="left:290.6px;top:419.9px;font-size:9.7px;color:#40454d;font-weight:400;-webkit-text-stroke:0.45px #40454d;transform:translateY(-50%) scaleX(1.015)">Teb Suest 'I: Aushig &amp; Kagme ;.. -‹</div>
<div class="t" style="left:281px;top:441.8px;font-size:10.77px;color:#40454d;font-weight:400;-webkit-text-stroke:0.45px #40454d;transform:translateY(-50%) scaleX(0.921)">iSYAiZFL: Kt</div>
<div class="t" style="left:291px;top:484.2px;font-size:9.7px;color:#40454d;font-weight:400;-webkit-text-stroke:0.45px #40454d;transform:translateY(-50%) scaleX(0.998)">Meoturicah Retolsi Antrour Svnuucas.</div>
<div class="t" style="left:282px;top:508px;font-size:11.5px;color:#40454d;font-weight:400;-webkit-text-stroke:0.45px #40454d;transform:translateY(-50%) scaleX(1.021)">S70800000(</div>
<div class="t" style="left:517.5px;top:486px;font-size:12px;color:#40454d;font-weight:400;-webkit-text-stroke:0.2px #40454d;transform:translateY(-50%) scaleX(1.196)">4</div>
<div class="t" style="left:534.5px;top:419.9px;font-size:9.7px;color:#40454d;font-weight:400;-webkit-text-stroke:0.45px #40454d;transform:translateY(-50%) scaleX(1.047)">Fuclue &amp; Astcral Aetuity .. 9</div>
<div class="t" style="left:526px;top:441.8px;font-size:10.7px;color:#40454d;font-weight:400;-webkit-text-stroke:0.45px #40454d;transform:translateY(-50%) scaleX(0.866)">SS28738.B5C</div>
<div class="t" style="left:534.5px;top:484.2px;font-size:9.7px;color:#40454d;font-weight:400;-webkit-text-stroke:0.45px #40454d;transform:translateY(-50%) scaleX(1.001)">Covirıuh Eirc</div>
<div class="t" style="left:528px;top:508px;font-size:11.09px;color:#40454d;font-weight:400;-webkit-text-stroke:0.45px #40454d;transform:translateY(-50%) scaleX(0.921)">S6I7 7416IC</div>
<div class="t" style="left:653.6px;top:487px;font-size:10.17px;color:#1c66b8;font-weight:700;transform:translateY(-50%) scaleX(0.921)">Volled</div>
<div class="t" style="left:739.8px;top:419.9px;font-size:9.7px;color:#40454d;font-weight:400;-webkit-text-stroke:0.45px #40454d;transform:translateY(-50%) scaleX(1.015)">ARot tovte Artstruat...</div>
<div class="t" style="left:733px;top:441.8px;font-size:10.7px;color:#40454d;font-weight:400;-webkit-text-stroke:0.45px #40454d;transform:translateY(-50%) scaleX(0.873)">S&amp;RKGJJB0</div>
<div class="t" style="left:740.5px;top:484.2px;font-size:9.7px;color:#40454d;font-weight:400;-webkit-text-stroke:0.45px #40454d;transform:translateY(-50%) scaleX(1.054)">Dedumtic‹Austtrric...</div>
<div class="t" style="left:730px;top:508px;font-size:10.7px;color:#40454d;font-weight:400;-webkit-text-stroke:0.45px #40454d;transform:translateY(-50%) scaleX(0.867)">&amp;ИEU I 590C</div>
</body>
</html>
